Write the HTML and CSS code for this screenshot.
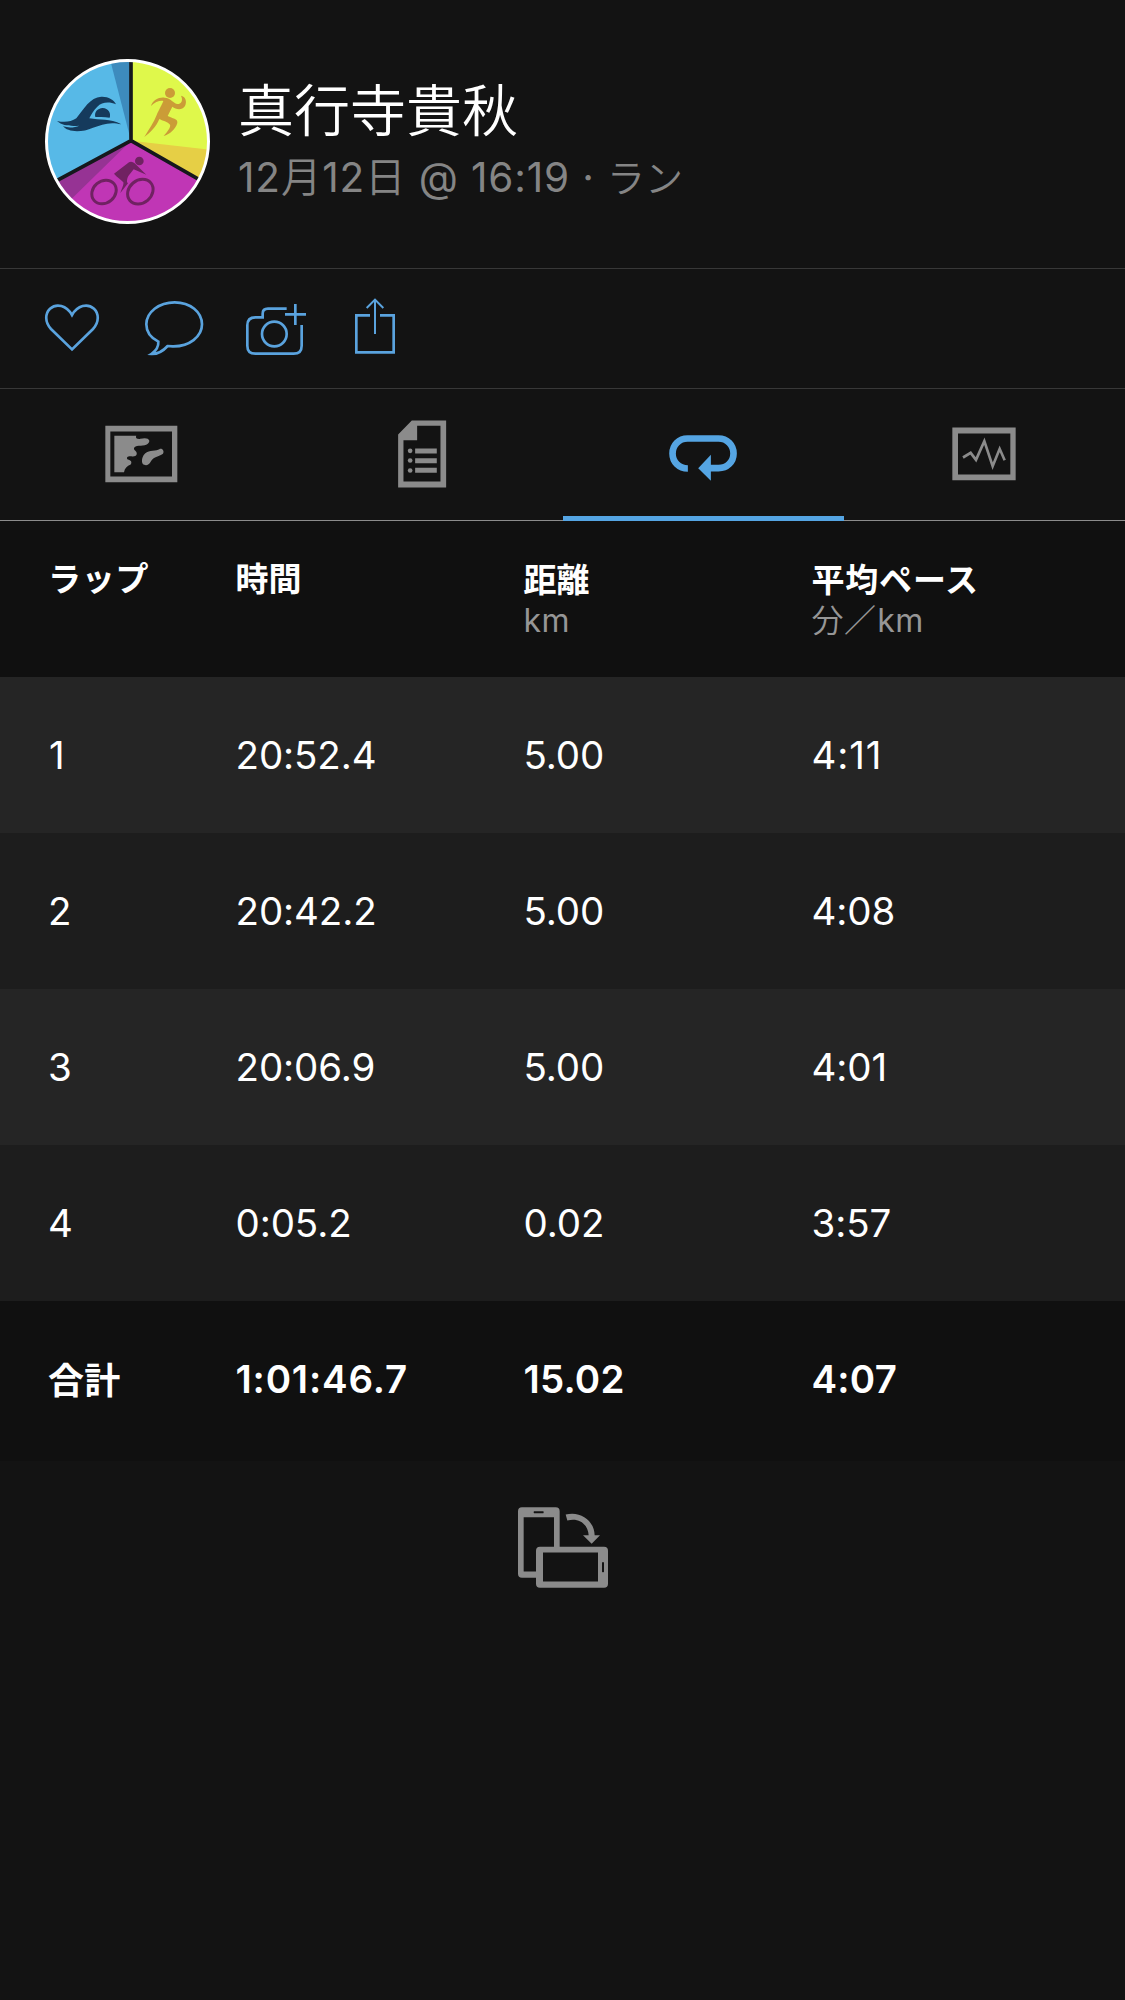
FILE: index.html
```html
<!DOCTYPE html>
<html lang="ja">
<head>
<meta charset="utf-8">
<title>真行寺貴秋 – ラン</title>
<link rel="stylesheet" href="styles.css">
</head>
<body>
<header class="profile">
  <svg class="avatar" viewBox="30 27 495 495">
    <defs><clipPath id="disc"><circle cx="277.500" cy="274.500" r="241"/></clipPath></defs>
    <g clip-path="url(#disc)">
      <path fill="#57b9e7" d="M20 20H288V272L20 412Z"/>
      <path fill="#3d8bbd" d="M223 20H288V272Z"/>
      <path fill="#dff84b" d="M288 20H540V412L288 272Z"/>
      <path fill="#e6cf45" d="M288 272L540 301V412Z"/>
      <path fill="#c036b5" d="M288 272L540 412V540H20V412Z"/>
      <path fill="#963394" d="M288 272L110 446L20 540V412Z"/>
      <path fill="none" stroke="#15181c" stroke-width="11" d="M288 20V272L20 416M288 272L540 416"/>
      <path fill="#153a5c" d="M66 213C88 218 108 216 124 205C146 177 165 142 199 140C219 139 237 149 243 163C222 154 200 157 187 170C174 182 169 194 163 205C194 211 225 205 259 223C224 214 200 224 174 233C139 249 97 246 84 229C103 235 120 232 133 227C108 229 83 228 66 213Z"/>
      <path fill="#153a5c" d="M181 201C177 187 187 175 203 174C220 175 229 190 224 203C210 200 196 201 181 201Z"/>
      <g fill="#cb9c37">
        <circle cx="405" cy="129" r="15"/>
        <path d="M348 168C352 151 374 140 389 143C407 144 417 161 427 162C439 162 445 151 438 137C451 139 457 154 450 168C440 183 422 178 412 170L398 198C412 206 429 205 427 219C422 237 405 253 386 258C398 244 408 231 405 224C399 215 381 212 373 207C364 230 345 248 328 261C341 239 357 217 365 195C371 180 382 162 385 153C374 151 359 157 348 168Z"/>
      </g>
      <g fill="#702262">
        <circle cx="313" cy="333" r="13"/>
        <path d="M237 371L282 337C288 333 296 336 302 343L334 374L296 358L280 378C276 386 274 396 279 400L256 429C261 415 267 402 265 397C257 388 246 382 237 371Z"/>
      </g>
      <g fill="none" stroke="#702262" stroke-width="9"><ellipse cx="207" cy="426" rx="39" ry="33" transform="rotate(-40 207 426)"/><ellipse cx="316" cy="425" rx="41" ry="34" transform="rotate(-40 316 425)"/></g>
    </g>
    <circle cx="277.500" cy="274.500" r="243" fill="none" stroke="#fff" stroke-width="9"/>
  </svg>
  <div class="who">
    <h1 class="name">真行寺貴秋</h1>
    <p class="when">12<span class="kanji">月</span>12<span class="kanji">日</span> @ 16:19 · <span class="kanji sport">ラン</span></p>
  </div>
</header>

<div class="actions">
  <svg class="heart" viewBox="45 114 162 180"><path d="M126 268L63 207C44 187 45 160 60 146C80 129 109 136 126 165C143 136 172 129 192 146C207 160 208 187 189 207Z"/></svg>
  <svg class="bubble" viewBox="345 114 174 180"><path d="M385 245C361 233 349 214 349 193C349 156 387 127 434 127S516 156 516 193S478 260 428 259L413 258C401 271 382 283 364 282C379 272 386 259 385 245Z"/></svg>
  <svg class="camera" viewBox="648 114 180 180"><path d="M770 146H714Q698 146 698 161V172H676Q652 172 652 196V257Q652 281 676 281H791Q815 281 815 257V195M765 163H828M796 132V195"/><circle cx="733" cy="222" r="37"/></svg>
  <svg class="share" viewBox="975 114 120 180"><path d="M1020 166H979V277H1091V166H1050"/><path class="thin" d="M1035 222V120M1010 144L1035 119L1060 144"/></svg>
</div>

<nav class="tabs">
  <a class="tab"><svg viewBox="38 49.500 228 228"><path fill-rule="evenodd" d="M45 76H261V245H45ZM60 93V228H245V93Z"/><path d="M72 106H138C134 113 141 117 150 115C162 112 175 112 177 121C177 132 163 136 145 136C130 137 128 146 135 151C144 160 138 169 126 168C113 166 106 171 112 177C122 179 126 185 121 192C110 197 103 203 101 215H72ZM165 158C176 148 199 152 207 146C216 142 223 152 218 160C210 167 189 168 181 184C175 196 164 197 157 190C152 180 157 164 165 158Z"/></svg></a>
  <a class="tab"><svg viewBox="881.600 49.500 228 228"><path fill-rule="evenodd" d="M965 60H1068V261H924V102ZM981 76V119H940V243H1051V76Z"/><path d="M975 144H1040V159H975ZM975 173H1040V188H975ZM975 202H1040V217H975Z"/><circle cx="960" cy="151" r="7"/><circle cx="960" cy="180" r="7"/><circle cx="960" cy="210" r="7"/></svg></a>
  <a class="tab active"><svg viewBox="345.400 49.500 228 228"><path class="loop" d="M414 204C387 204 368 184 368 159S387 114 413 114H506C532 114 551 134 551 159S532 203 506 203H480"/><path d="M445 203L483 163V241Z"/></svg></a>
  <a class="tab"><svg viewBox="1189 49.500 228 228"><path fill-rule="evenodd" d="M1208 81H1398V239H1208ZM1225 99V222H1382V99Z"/><path class="pulse" d="M1240 171L1263 157L1279 178L1304 122L1329 197L1350 145L1365 179"/></svg></a>
</nav>

<main>
  <section class="laps">
    <div class="row head">
      <div>ラップ</div><div class="tight">時間</div><div class="low tight">距離<small>km</small></div><div class="low">平均ペース<small><i>分／</i>km</small></div>
    </div>
    <div class="row odd"><div class="ones">1</div><div>20:52.4</div><div>5.00</div><div class="ones">4:11</div></div>
    <div class="row even"><div>2</div><div>20:42.2</div><div>5.00</div><div>4:08</div></div>
    <div class="row odd"><div>3</div><div>20:06.9</div><div>5.00</div><div>4:01</div></div>
    <div class="row even"><div>4</div><div>0:05.2</div><div>0.02</div><div>3:57</div></div>
    <div class="row total"><div class="sum">合計</div><div class="elapsed">1:01:46.7</div><div>15.02</div><div>4:07</div></div>
  </section>
  <svg class="rotate" viewBox="54 50 270 242">
    <path fill-rule="evenodd" d="M66 50H167Q179 50 179 62V169H312Q324 169 324 181V280Q324 292 312 292H120Q108 292 108 280V262H66Q54 262 54 250V62Q54 50 66 50ZM71 80V243H108V181Q108 169 120 169H162V80ZM102 62Q100 65 102 68H130Q132 65 130 62ZM129 186V273H294V186ZM306 216V244Q309 247 312 244V216Q309 213 306 216Z"/>
    <path d="M197 72C242 60 283 91 284 134H300L275 160L249 134H266C264 102 238 80 202 90Z"/>
  </svg>
</main>
</body>
</html>
```
FILE: styles.css
```css
* { box-sizing: border-box; }

body {
  margin: 0;
  min-height: 2000px;
  background: #131313;
  color: #fff;
  font-family: Inter, "Noto Sans CJK JP", sans-serif;
}

svg { display: block; }

.profile {
  display: flex;
  gap: 28px;
  height: 269px;
  padding: 59px 45px 0;
  border-bottom: 1px solid #383838;
}

.avatar { width: 165px; height: 165px; flex: none; }

.who { padding-top: 12px; white-space: nowrap; }

.name {
  margin: 0;
  font-size: 56px;
  font-weight: 350;
  line-height: 80px;
}

.when {
  margin: 0;
  color: #858585;
  font-size: 40.5px;
  letter-spacing: 0.85px;
  line-height: 54px;
}

.kanji { font-weight: 350; }
.sport { font-size: 38px; letter-spacing: 0; }

.actions {
  display: flex;
  height: 120px;
  padding: 29px 45px 0;
  border-bottom: 1px solid #383838;
}

.actions svg {
  height: 60px;
  fill: none;
  stroke: #5aa3de;
  stroke-width: 8;
  overflow: visible;
}

.heart { width: 54px; margin-right: 46px; }
.bubble { width: 58px; margin-right: 43px; }
.camera { width: 60px; margin-right: 49px; }
.share { width: 40px; }
.actions .thin { stroke-width: 6; }

.tabs {
  display: grid;
  grid-template-columns: repeat(4, 1fr);
  height: 132px;
  border-bottom: 1px solid #8c8c8c;
}

.tab {
  display: flex;
  justify-content: center;
  align-items: center;
  height: 132px;
  padding-bottom: 1px;
  color: #8b8b8b;
}

.tab svg { width: 76px; height: 76px; fill: currentColor; }

.tab.active {
  color: #55a5e3;
  box-shadow: inset 0 -5px #55a5e3;
}

.loop, .pulse { fill: none; stroke: currentColor; }
.loop { stroke-width: 20; }
.pulse { stroke-width: 8; }

.row {
  display: grid;
  grid-template-columns: 187.500px 288px 288px 1fr;
  align-items: center;
  height: 156px;
  padding-left: 48px;
  font-size: 38.5px;
  letter-spacing: -0.1px;
  white-space: nowrap;
}

.odd { background: #252525; }
.even { background: #1d1d1d; }

.ones { letter-spacing: 0.9px; }
.ones:first-child { padding-left: 1px; }

.head {
  align-items: start;
  padding-top: 34px;
  background: #101010;
  font-size: 33px;
  font-weight: 700;
  letter-spacing: 0.8px;
  line-height: 48px;
}

.tight { letter-spacing: 0; }
.low { padding-top: 1px; }

.head small {
  display: block;
  color: #969696;
  font-size: 32px;
  font-weight: 400;
  letter-spacing: 0.4px;
  line-height: 34px;
}

.head i {
  margin-right: 1px;
  font-style: normal;
  font-weight: 350;
}

.total {
  height: 160px;
  padding-bottom: 4px;
  background: #101010;
  font-weight: 600;
  letter-spacing: 0.2px;
}

.elapsed { letter-spacing: 0.8px; }
.sum { padding-bottom: 3px; font-size: 36px; font-weight: 700; }

.rotate {
  width: 90px;
  height: 81px;
  margin: 46px auto 0;
  fill: #8b8b8b;
}
```
